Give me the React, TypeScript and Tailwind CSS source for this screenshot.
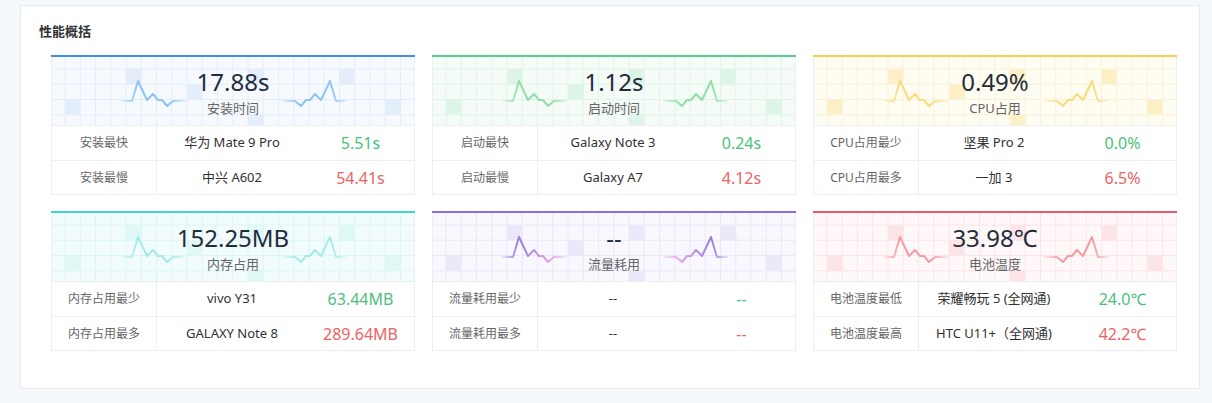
import React from "react";

type Theme = {
  bar: string;
  bg: string;
  line: string;
  square: string;
  beatA: string;
  beatB: string;
};

const themes: Record<string, Theme> = {
  blue: { bar: "border-t-[#3d8fe3]", bg: "#f6f9fe", line: "#e4eefa", square: "#e4eefb", beatA: "#8cc4f7", beatB: "#8cc4f7" },
  green: { bar: "border-t-[#5ccb8c]", bg: "#f5fcf8", line: "#e0f4e8", square: "#ddf5e6", beatA: "#92deaa", beatB: "#92deaa" },
  yellow: { bar: "border-t-[#f2cf55]", bg: "#fffcf2", line: "#fbf1d6", square: "#fdf0c6", beatA: "#f7db7e", beatB: "#f7db7e" },
  teal: { bar: "border-t-[#3fd6cf]", bg: "#f3fcfc", line: "#dcf5f3", square: "#e0f8f6", beatA: "#a3ebe8", beatB: "#a3ebe8" },
  purple: { bar: "border-t-[#8a6ade]", bg: "#f9f8fe", line: "#ebe8f8", square: "#ece8fa", beatA: "#9a80dc", beatB: "#e2a6ec" },
  red: { bar: "border-t-[#e65a6e]", bg: "#fff8f9", line: "#fbe5e8", square: "#fde4e8", beatA: "#f39ca3", beatB: "#f39ca3" },
};

const cards = [
  {
    id: "a",
    theme: "blue",
    value: "17.88s",
    label: "安装时间",
    rows: [
      ["安装最快", "华为 Mate 9 Pro", "5.51s"],
      ["安装最慢", "中兴 A602", "54.41s"],
    ],
  },
  {
    id: "b",
    theme: "green",
    value: "1.12s",
    label: "启动时间",
    rows: [
      ["启动最快", "Galaxy Note 3", "0.24s"],
      ["启动最慢", "Galaxy A7", "4.12s"],
    ],
  },
  {
    id: "c",
    theme: "yellow",
    value: "0.49%",
    label: "CPU占用",
    rows: [
      ["CPU占用最少", "坚果 Pro 2", "0.0%"],
      ["CPU占用最多", "一加 3", "6.5%"],
    ],
  },
  {
    id: "d",
    theme: "teal",
    value: "152.25MB",
    label: "内存占用",
    rows: [
      ["内存占用最少", "vivo Y31", "63.44MB"],
      ["内存占用最多", "GALAXY Note 8", "289.64MB"],
    ],
  },
  {
    id: "e",
    theme: "purple",
    value: "--",
    label: "流量耗用",
    rows: [
      ["流量耗用最少", "--", "--"],
      ["流量耗用最多", "--", "--"],
    ],
  },
  {
    id: "f",
    theme: "red",
    value: "33.98℃",
    label: "电池温度",
    rows: [
      ["电池温度最低", "荣耀畅玩 5 (全网通)", "24.0℃"],
      ["电池温度最高", "HTC U11+（全网通)", "42.2℃"],
    ],
  },
];

const squares = [
  [0, 2],
  [4, 0],
  [8, 1],
  [12, 0],
  [12, 3],
  [18, 0],
  [21, 2],
];

const leftBeat = "M69 44 L80 44 L86 24 L95 43 L101 37 L106 43 L110 43 L115 49 L121 44 L134 44";
const rightBeat = "M295 44 L284 44 L278 24 L269 43 L263 37 L258 43 L254 43 L249 49 L243 44 L230 44";

const HeaderArt = ({ id, t }: { id: string; t: Theme }) => {
  const cell = 15.25;
  const vLines = Array.from({ length: 25 }, (_, i) => -2.25 + i * cell);
  const hLines = Array.from({ length: 6 }, (_, i) => -3.25 + i * cell);
  return (
    <svg className="absolute inset-0" width="100%" height="100%" viewBox="0 0 362 68" preserveAspectRatio="none">
      <defs>
        <linearGradient id={`gl-${id}`} gradientUnits="userSpaceOnUse" x1="69" y1="0" x2="134" y2="0">
          <stop offset="0" stopColor={t.beatA} stopOpacity="0.15" />
          <stop offset="0.25" stopColor={t.beatA} stopOpacity="1" />
          <stop offset="0.75" stopColor={t.beatB} stopOpacity="1" />
          <stop offset="1" stopColor={t.beatB} stopOpacity="0.15" />
        </linearGradient>
        <linearGradient id={`gr-${id}`} gradientUnits="userSpaceOnUse" x1="295" y1="0" x2="230" y2="0">
          <stop offset="0" stopColor={t.beatA} stopOpacity="0.15" />
          <stop offset="0.25" stopColor={t.beatA} stopOpacity="1" />
          <stop offset="0.75" stopColor={t.beatB} stopOpacity="1" />
          <stop offset="1" stopColor={t.beatB} stopOpacity="0.15" />
        </linearGradient>
      </defs>
      <rect x="0" y="0" width="362" height="68" fill={t.bg} />
      {squares.map(([c, r]) => (
        <rect key={`${c}-${r}`} x={-2.25 + c * cell + cell} y={-3.25 + r * cell + cell} width={cell} height={cell} fill={t.square} />
      ))}
      {vLines.map((x) => (
        <line key={`v${x}`} x1={x} y1="0" x2={x} y2="68" stroke={t.line} strokeWidth="1" />
      ))}
      {hLines.map((y) => (
        <line key={`h${y}`} x1="0" y1={y} x2="362" y2={y} stroke={t.line} strokeWidth="1" />
      ))}
      <path d={leftBeat} fill="none" stroke={`url(#gl-${id})`} strokeWidth="2" strokeLinejoin="round" />
      <path d={rightBeat} fill="none" stroke={`url(#gr-${id})`} strokeWidth="2" strokeLinejoin="round" />
    </svg>
  );
};

const StatCard = ({ card }: { card: (typeof cards)[number] }) => {
  const t = themes[card.theme];
  return (
    <div className={`border-t-2 ${t.bar}`}>
      <div className="border-x border-[#ebeef5]">
        {/* Header */}
        <div className="relative h-[68px] overflow-hidden">
          <HeaderArt id={card.id} t={t} />
          <div className="relative flex flex-col items-center pt-[11px]">
            <div className="text-[24px] leading-[28px] text-[#1f2d3d]">{card.value}</div>
            <div className="mt-[3px] text-[13px] leading-[18px] text-[#666]">{card.label}</div>
          </div>
        </div>

        {/* Rows */}
        {card.rows.map((row, i) => (
          <div key={row[0]} className="flex h-[35px] items-center border-t border-[#ebeef5] last:border-b">
            <div className="flex h-full w-[105px] items-center justify-center border-r border-[#ebeef5] text-[12px] text-[#666]">
              {row[0]}
            </div>
            <div className="w-[150px] text-center text-[13px] text-[#303133]">{row[1]}</div>
            <div className={`flex-1 text-center text-[16px] ${i === 0 ? "text-[#4cbf7c]" : "text-[#ec6363]"}`}>{row[2]}</div>
          </div>
        ))}
      </div>
    </div>
  );
};

export default function App() {
  return (
    <div className="min-h-[403px] bg-[#f6f9fc] pt-[5px] font-['Noto_Sans','Noto_Sans_CJK_SC',sans-serif]">
      <div className="ml-[20px] h-[384px] w-[1180px] border border-[#e6ebf1] bg-white">
        <h2 className="pl-[18px] pt-[16px] text-[13px] font-bold leading-[18px] text-[#303133]">性能概括</h2>
        <div className="ml-[30px] mt-[15px] grid w-[1126px] grid-cols-3 gap-x-[17px] gap-y-[16px]">
          {cards.map((c) => (
            <StatCard key={c.id} card={c} />
          ))}
        </div>
      </div>
    </div>
  );
}
